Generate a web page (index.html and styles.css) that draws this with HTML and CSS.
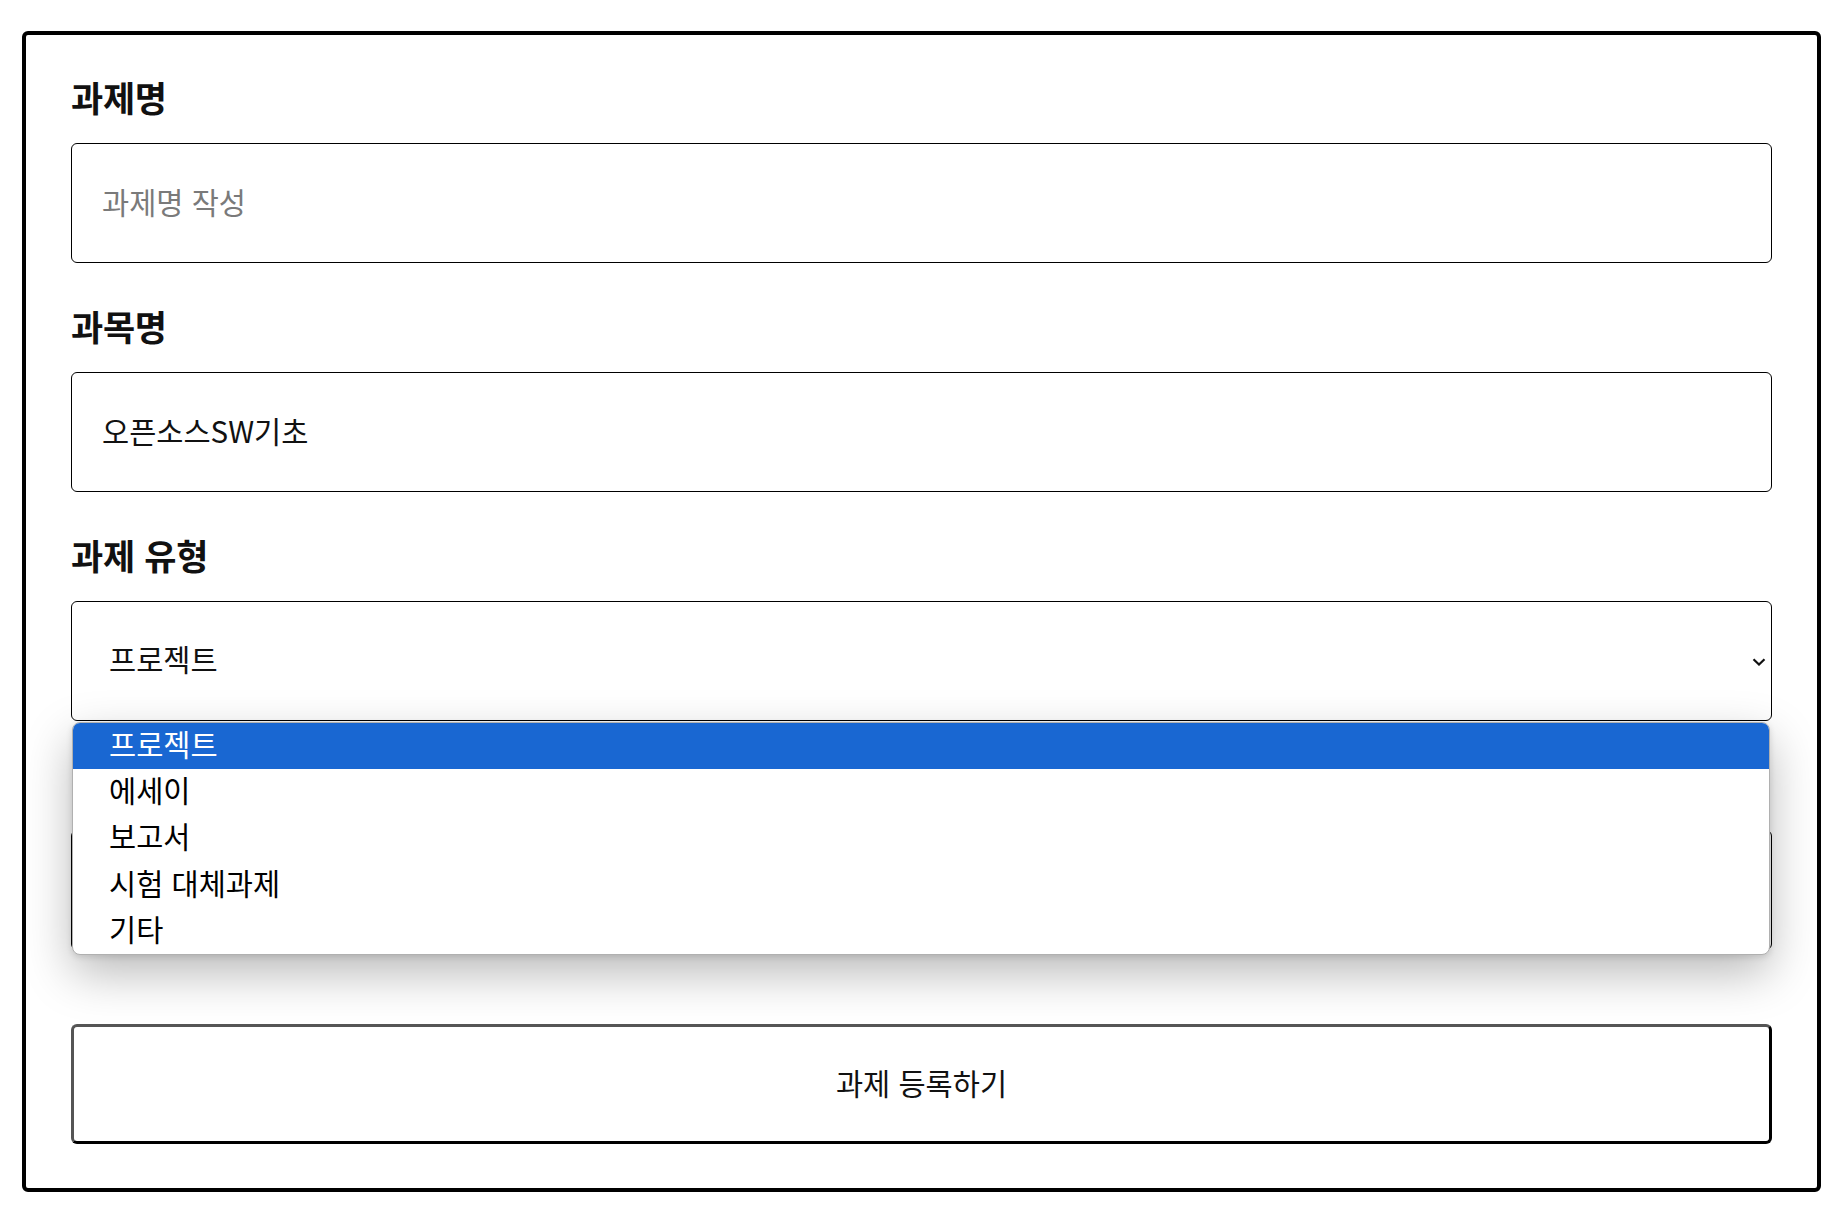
FILE: index.html
```html
<!DOCTYPE html>
<html lang="ko">
<head>
<meta charset="utf-8">
<title>과제 등록</title>
<link rel="stylesheet" href="styles.css">
</head>
<body>
<div class="card">
  <form class="form">
    <div class="field">
      <label class="label">과제명</label>
      <input class="text-input" type="text" placeholder="과제명 작성">
    </div>
    <div class="field">
      <label class="label">과목명</label>
      <input class="text-input" type="text" value="오픈소스SW기초">
    </div>
    <div class="field">
      <label class="label">과제 유형</label>
      <div class="select-wrap">
        <div class="select-box">
          <span class="select-value">프로젝트</span>
          <svg class="chevron" width="14" height="8" viewBox="0 0 14 8"><path d="M1.5 1.2 L7 6.5 L12.5 1.2" fill="none" stroke="#111" stroke-width="2.2"/></svg>
        </div>
        <ul class="dropdown">
          <li class="option selected">프로젝트</li>
          <li class="option">에세이</li>
          <li class="option">보고서</li>
          <li class="option">시험 대체과제</li>
          <li class="option">기타</li>
        </ul>
      </div>
    </div>
    <div class="field">
      <label class="label covered">마감일</label>
      <input class="text-input" type="text">
    </div>
    <button class="submit" type="button">과제 등록하기</button>
  </form>
</div>
</body>
</html>
```

FILE: styles.css
```css
* { box-sizing: border-box; }

html, body {
  margin: 0;
  padding: 0;
  background: #fff;
}

body {
  font-family: "Noto Sans CJK KR", "Noto Sans", sans-serif;
  color: #111;
}

.card {
  margin: 31px 24px 0 22px;
  border: 4px solid #000;
  border-radius: 6px;
  padding: 44px 45px 44px 45px;
}

.form {
  display: flex;
  flex-direction: column;
  gap: 45px;
}

.field {
  display: flex;
  flex-direction: column;
  gap: 24px;
}

.label {
  font-size: 35px;
  font-weight: 700;
  line-height: 36px;
  height: 40px;
  color: #111;
  letter-spacing: -0.3px;
}

.label.covered {
  visibility: hidden;
}

.text-input {
  height: 120px;
  width: 100%;
  border: 1px solid #000;
  border-radius: 6px;
  padding: 0 30px 5px;
  font-family: "Noto Sans CJK KR", "Noto Sans", sans-serif;
  font-size: 29.5px;
  color: #111;
  background: #fff;
  outline: none;
}

.text-input::placeholder {
  color: #7a7a7a;
}

.select-wrap {
  position: relative;
}

.select-box {
  height: 120px;
  border: 1px solid #000;
  border-radius: 6px;
  padding: 0 5px 0 37px;
  display: flex;
  align-items: center;
  justify-content: space-between;
  font-size: 29.5px;
  color: #111;
  background: #fff;
}

.select-value {
  padding-bottom: 6px;
}

.chevron {
  display: block;
  margin-top: 2px;
}

.dropdown {
  position: absolute;
  top: calc(100% + 1px);
  left: 1px;
  right: 2px;
  margin: 0;
  padding: 0;
  list-style: none;
  background: #fff;
  border: 1px solid #b0b0b0;
  border-radius: 8px;
  overflow: hidden;
  box-shadow: 0 18px 48px rgba(0, 0, 0, 0.28), 0 2px 6px rgba(0, 0, 0, 0.12);
  z-index: 10;
}

.option {
  height: 46.2px;
  line-height: 41px;
  padding: 0 0 5px 36px;
  font-size: 29.5px;
  color: #000;
}

.option.selected {
  background: #1967d2;
  color: #fff;
}

.submit {
  margin-top: 29px;
  height: 120px;
  width: 100%;
  background: #fff;
  border: 3px solid #000;
  border-top-color: #555;
  border-left-color: #555;
  border-radius: 6px;
  padding: 0 0 4px;
  font-family: "Noto Sans CJK KR", "Noto Sans", sans-serif;
  font-size: 29.5px;
  color: #111;
  cursor: pointer;
}
```
